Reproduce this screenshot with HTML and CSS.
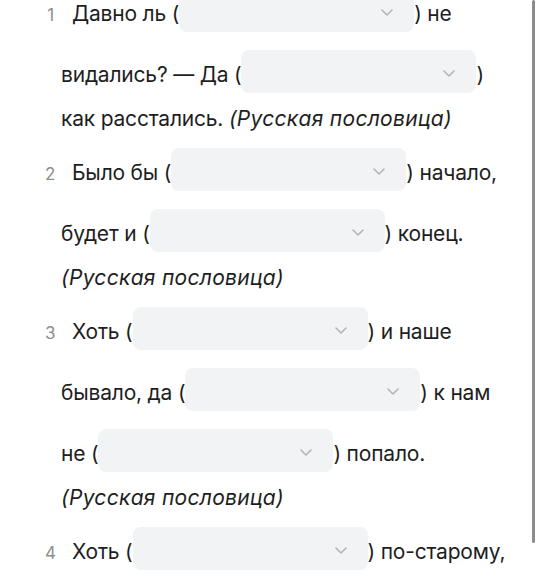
FILE: index.html
```html
<!DOCTYPE html>
<html lang="ru">
<head>
<meta charset="utf-8">
<title>Пословицы</title>
<link rel="stylesheet" href="styles.css">
</head>
<body>
<main class="page">
  <ol class="tasks">
    <li class="task"><span class="num">1</span>Давно ль <span class="gap">(<span class="select"><svg class="chev" viewBox="0 0 12 7"><path d="M1 1l5 5 5-5"/></svg></span>)</span> не видались? — Да <span class="gap">(<span class="select"><svg class="chev" viewBox="0 0 12 7"><path d="M1 1l5 5 5-5"/></svg></span>)</span> как расстались. <em class="src">(Русская пословица)</em></li>
    <li class="task"><span class="num">2</span>Было бы <span class="gap">(<span class="select"><svg class="chev" viewBox="0 0 12 7"><path d="M1 1l5 5 5-5"/></svg></span>)</span> начало, будет и <span class="gap">(<span class="select"><svg class="chev" viewBox="0 0 12 7"><path d="M1 1l5 5 5-5"/></svg></span>)</span> конец. <em class="src">(Русская пословица)</em></li>
    <li class="task"><span class="num">3</span>Хоть <span class="gap">(<span class="select"><svg class="chev" viewBox="0 0 12 7"><path d="M1 1l5 5 5-5"/></svg></span>)</span> и наше бывало, да <span class="gap">(<span class="select"><svg class="chev" viewBox="0 0 12 7"><path d="M1 1l5 5 5-5"/></svg></span>)</span> к нам не <span class="gap">(<span class="select"><svg class="chev" viewBox="0 0 12 7"><path d="M1 1l5 5 5-5"/></svg></span>)</span> попало. <em class="src">(Русская пословица)</em></li>
    <li class="task"><span class="num">4</span>Хоть <span class="gap">(<span class="select"><svg class="chev" viewBox="0 0 12 7"><path d="M1 1l5 5 5-5"/></svg></span>)</span> по-старому, <span class="gap">(<span class="select"><svg class="chev" viewBox="0 0 12 7"><path d="M1 1l5 5 5-5"/></svg></span>)</span> по-новому. <em class="src">(Русская пословица)</em></li>
  </ol>
</main>
<div class="scrollbar"></div>
</body>
</html>
```
FILE: styles.css
```css
html, body {
  margin: 0;
  padding: 0;
  background: #ffffff;
  overflow: hidden;
}

body {
  font-family: Inter, "Noto Sans", sans-serif;
  font-size: 21px;
  letter-spacing: -0.2px;
  color: #1e1e1e;
}

.page {
  margin-top: -20px;
}

.tasks {
  list-style: none;
  margin: 0;
  padding: 0 20px 0 61px;
  width: 459px;
}

.task {
  line-height: 34px;
  margin-bottom: 3px;
}

.num {
  display: inline-block;
  box-sizing: border-box;
  width: 27px;
  margin-left: -16px;
  padding-right: 18px;
  text-align: right;
  font-size: 17px;
  color: #8e8e8e;
}

.gap {
  white-space: nowrap;
}

.select {
  display: inline-block;
  box-sizing: border-box;
  width: 235px;
  height: 43px;
  margin: 9px 0;
  padding-right: 21px;
  border-radius: 8px;
  background: #f2f3f5;
  line-height: 43px;
  text-align: right;
  vertical-align: -20px;
  overflow: hidden;
}

.chev {
  width: 12px;
  height: 7px;
  vertical-align: middle;
  fill: none;
  stroke: #b3b5ba;
  stroke-width: 1.6;
  stroke-linecap: round;
  stroke-linejoin: round;
}

.src {
  font-style: italic;
  letter-spacing: 0.3px;
}

.scrollbar {
  position: fixed;
  top: 0;
  right: 5px;
  width: 3px;
  height: 543px;
  border-radius: 2px;
  background: #8c8c8c;
}
```
